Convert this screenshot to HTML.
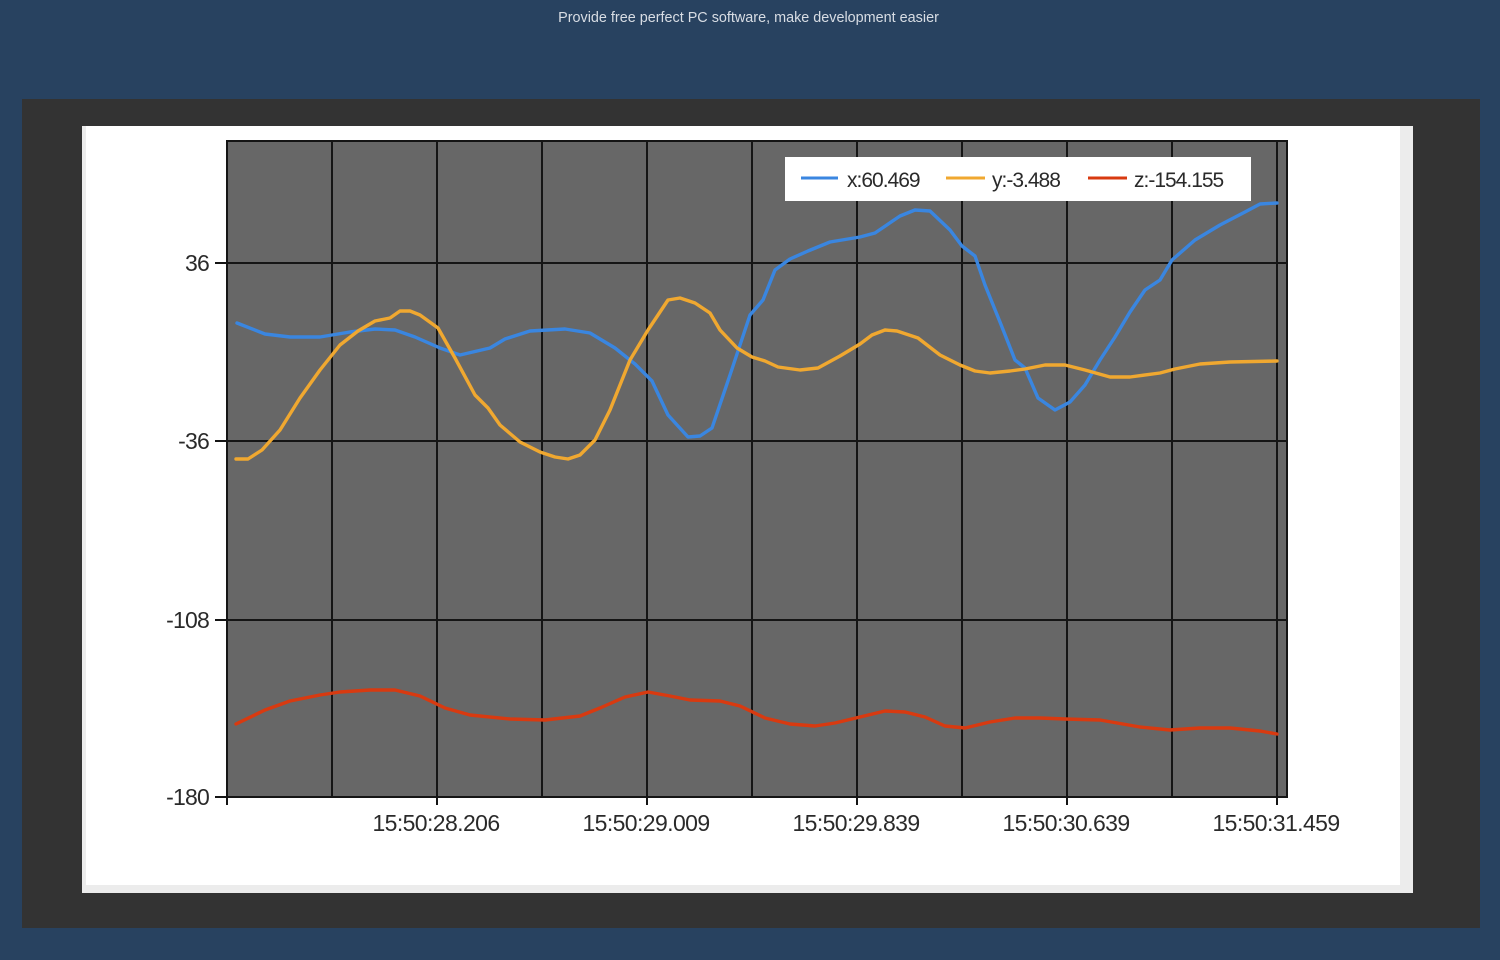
<!DOCTYPE html>
<html><head><meta charset="utf-8"><style>
html,body{margin:0;padding:0;width:1500px;height:960px;background:#284260;overflow:hidden;font-family:"Liberation Sans",sans-serif}
.sub{position:absolute;left:0;width:1497px;top:10px;text-align:center;color:#d8dde4;font-size:14.4px}
</style></head><body>
<div class="sub">Provide free perfect PC software, make development easier</div>
<svg width="1500" height="960" style="position:absolute;left:0;top:0">
<rect x="22" y="99" width="1458" height="829" fill="#333333"/>
<rect x="82" y="126" width="1331" height="767" fill="#ececec"/>
<rect x="86" y="126" width="1314" height="759" fill="#ffffff"/>
<rect x="227" y="141" width="1060" height="656" fill="#676767" stroke="#151515" stroke-width="2"/>
<g stroke="#151515" stroke-width="2">
<line x1="332" y1="141" x2="332" y2="797"/><line x1="437" y1="141" x2="437" y2="805"/>
<line x1="542" y1="141" x2="542" y2="797"/><line x1="647" y1="141" x2="647" y2="805"/>
<line x1="752" y1="141" x2="752" y2="797"/><line x1="857" y1="141" x2="857" y2="805"/>
<line x1="962" y1="141" x2="962" y2="797"/><line x1="1067" y1="141" x2="1067" y2="805"/>
<line x1="1172" y1="141" x2="1172" y2="797"/><line x1="1277" y1="141" x2="1277" y2="805"/>
<line x1="227" y1="797" x2="227" y2="805"/>
<line x1="215" y1="263" x2="1287" y2="263"/><line x1="215" y1="441" x2="1287" y2="441"/>
<line x1="215" y1="620" x2="1287" y2="620"/><line x1="215" y1="797" x2="227" y2="797"/>
</g>
<g font-size="23" fill="#2a2a2a" text-anchor="end" letter-spacing="-0.8">
<text x="209" y="271">36</text><text x="209" y="449">-36</text>
<text x="209" y="628">-108</text><text x="209" y="805">-180</text>
</g>
<g font-size="23" fill="#2a2a2a" text-anchor="middle" letter-spacing="-0.6">
<text x="436" y="831">15:50:28.206</text><text x="646" y="831">15:50:29.009</text>
<text x="856" y="831">15:50:29.839</text><text x="1066" y="831">15:50:30.639</text>
<text x="1276" y="831">15:50:31.459</text>
</g>
<g fill="none" stroke-width="3.4" stroke-linejoin="round" stroke-linecap="round">
<polyline stroke="#3a86e0" points="237,323 265,334 290,337 320,337 350,332 375,329 395,330 415,337 440,348 460,355 490,348 505,339 530,331 565,329 590,333 615,348 635,364 652,381 668,415 688,437 700,436 712,428 730,375 750,315 763,300 775,270 790,259 808,251 830,242 860,237 875,233 900,216 915,210 930,211 950,230 962,246 975,256 985,285 1000,322 1015,360 1025,368 1038,398 1055,410 1070,402 1085,385 1100,360 1115,337 1130,312 1145,290 1160,280 1172,260 1195,240 1220,225 1245,212 1260,204 1277,203"/>
<polyline stroke="#f0a830" points="236,459 248,459 262,450 280,430 300,398 320,370 340,345 358,331 375,321 390,318 400,311 410,311 420,315 438,328 455,358 475,395 488,408 500,425 520,442 540,452 555,457 568,459 580,455 595,440 610,410 630,360 648,330 668,300 680,298 695,303 710,313 720,330 737,348 752,357 765,361 778,367 800,370 818,368 840,356 860,344 872,335 885,330 897,331 918,338 940,355 960,365 975,371 990,373 1010,371 1025,369 1045,365 1065,365 1085,370 1110,377 1130,377 1160,373 1175,369 1200,364 1230,362 1277,361"/>
<polyline stroke="#d83a10" points="236,724 265,710 290,701 320,695 340,692 370,690 395,690 420,696 445,708 470,715 510,719 545,720 580,716 600,708 625,697 648,692 670,696 690,700 720,701 740,706 765,718 790,724 815,726 835,723 860,717 885,711 905,712 925,717 945,726 965,728 990,722 1015,718 1040,718 1065,719 1100,720 1140,727 1170,730 1200,728 1230,728 1260,731 1277,734"/>
</g>
<rect x="785" y="157" width="466" height="44" fill="#ffffff"/>
<g stroke-width="3"><line x1="801" y1="178" x2="838" y2="178" stroke="#3a86e0"/>
<line x1="946" y1="178" x2="985" y2="178" stroke="#f0a830"/>
<line x1="1088" y1="178" x2="1127" y2="178" stroke="#d83a10"/></g>
<g font-size="21" fill="#2a2a2a" letter-spacing="-1">
<text x="847" y="187">x:60.469</text><text x="992" y="187">y:-3.488</text><text x="1134" y="187">z:-154.155</text>
</g>
</svg>
</body></html>
